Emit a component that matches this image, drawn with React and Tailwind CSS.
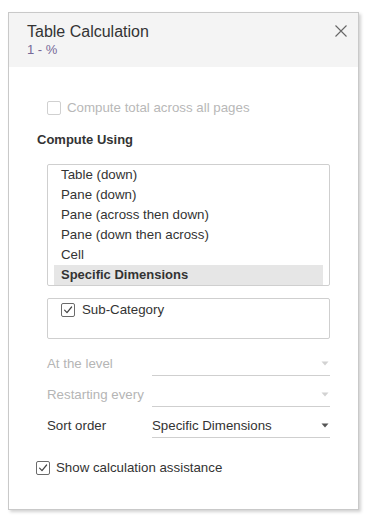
import React from "react";

function Check({ checked, disabled }) {
  return (
    <span
      className={
        "flex h-[14px] w-[14px] shrink-0 items-center justify-center rounded-[2px] border bg-white " +
        (disabled ? "border-[#d0d0d0]" : "border-[#6b6b6b]")
      }
    >
      {checked && (
        <svg width="10" height="10" viewBox="0 0 10 10" fill="none">
          <path d="M1.6 5.2 L4 7.6 L8.6 2" stroke="#444" strokeWidth="1.2" strokeLinecap="round" strokeLinejoin="round" />
        </svg>
      )}
    </span>
  );
}

function Arrow({ disabled }) {
  return (
    <svg width="8" height="5" viewBox="0 0 8 5">
      <path d="M0.5 0.5 L7.5 0.5 L4 4.5 Z" fill={disabled ? "#d2d2d2" : "#555"} />
    </svg>
  );
}

function SelectRow({ label, value, disabled }) {
  return (
    <div className="flex h-[24px] items-center">
      <div className={"w-[105px] leading-[20px] " + (disabled ? "text-[#b5b5b5]" : "text-[#333]")}>{label}</div>
      <div className="flex h-[24px] w-[178px] items-center justify-between border-b border-[#cfcfcf] pr-[1px]">
        <span className="leading-[20px] text-[#333]">{value}</span>
        <Arrow disabled={disabled} />
      </div>
    </div>
  );
}

export default function App() {
  const items = [
    "Table (down)",
    "Pane (down)",
    "Pane (across then down)",
    "Pane (down then across)",
    "Cell",
  ];
  return (
    <div
      className="min-h-[521px] bg-white pl-[8px] pt-[12px]"
      style={{ fontFamily: '"Liberation Sans", Arial, sans-serif' }}
    >
      <div className="h-[498px] w-[351px] border border-[#c9c9c9] bg-white shadow-[2px_2px_3px_rgba(0,0,0,0.18)]">
        <div className="flex items-start justify-between bg-[#f4f4f4] pb-[9px] pl-[18px] pr-[11px] pt-[9px]">
          <div>
            <div className="text-[16px] leading-[20px] text-[#333]">Table Calculation</div>
            <div className="text-[13px] leading-[16px] text-[#766a98]">1 - %</div>
          </div>
          <svg className="mt-[3px]" width="12" height="12" viewBox="0 0 12 12">
            <path d="M0.5 0.5 L11.5 11.5 M11.5 0.5 L0.5 11.5" stroke="#666" strokeWidth="1.1" />
          </svg>
        </div>
        <div className="pl-[27px] pt-[31px] text-[13.3px]">
          <div className="ml-[11px] flex h-[20px] items-center gap-[6px]">
            <Check disabled />
            <span className="leading-[20px] text-[#b8b8b8]">Compute total across all pages</span>
          </div>
          <div className="ml-px mt-[12px] text-[13px] font-bold leading-[20px] text-[#333]">Compute Using</div>
          <div className="ml-[11px] mt-[14px] w-[283px] rounded-[2px] border border-[#cfcfcf] px-[6px]">
            {items.map((t) => (
              <div key={t} className="h-[20px] pl-[7px] leading-[20px] text-[#333]">
                {t}
              </div>
            ))}
            <div className="h-[20px] bg-[#e6e6e6] pl-[7px] text-[13px] font-bold leading-[20px] text-[#333]">
              Specific Dimensions
            </div>
          </div>
          <div className="ml-[11px] mt-[12px] h-[41px] w-[283px] rounded-[2px] border border-[#cfcfcf] pl-[13px] pt-px">
            <div className="flex h-[20px] items-center gap-[7px]">
              <Check checked />
              <span className="leading-[20px] text-[#333]">Sub-Category</span>
            </div>
          </div>
          <div className="ml-[11px] mt-[13px] flex flex-col gap-[7px]">
            <SelectRow label="At the level" value="" disabled />
            <SelectRow label="Restarting every" value="" disabled />
            <SelectRow label="Sort order" value="Specific Dimensions" />
          </div>
          <div className="mt-[20px] flex h-[20px] items-center gap-[6px]">
            <Check checked />
            <span className="leading-[20px] text-[#333]">Show calculation assistance</span>
          </div>
        </div>
      </div>
    </div>
  );
}
